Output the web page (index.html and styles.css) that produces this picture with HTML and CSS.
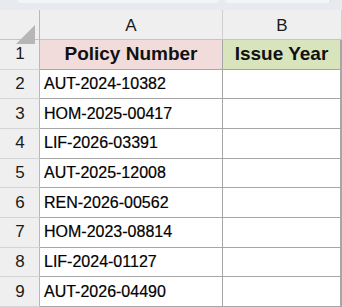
FILE: index.html
```html
<!DOCTYPE html>
<html>
<head>
<meta charset="utf-8">
<link rel="stylesheet" href="styles.css">
</head>
<body>
<div class="topbar">
  <div class="namebox"></div>
  <div class="fxbox"></div>
</div>
<div class="sheet">
  <div class="corner"><div class="tri"></div></div>
  <div class="colhead">A</div>
  <div class="colhead last">B</div>

  <div class="rowhead">1</div>
  <div class="cell hdr pink">Policy Number</div>
  <div class="cell hdr green last">Issue Year</div>

  <div class="rowhead">2</div>
  <div class="cell">AUT-2024-10382</div>
  <div class="cell last"></div>

  <div class="rowhead">3</div>
  <div class="cell">HOM-2025-00417</div>
  <div class="cell last"></div>

  <div class="rowhead">4</div>
  <div class="cell">LIF-2026-03391</div>
  <div class="cell last"></div>

  <div class="rowhead">5</div>
  <div class="cell">AUT-2025-12008</div>
  <div class="cell last"></div>

  <div class="rowhead">6</div>
  <div class="cell">REN-2026-00562</div>
  <div class="cell last"></div>

  <div class="rowhead">7</div>
  <div class="cell">HOM-2023-08814</div>
  <div class="cell last"></div>

  <div class="rowhead">8</div>
  <div class="cell">LIF-2024-01127</div>
  <div class="cell last"></div>

  <div class="rowhead">9</div>
  <div class="cell">AUT-2026-04490</div>
  <div class="cell last"></div>
</div>
</body>
</html>
```

FILE: styles.css
```css
html, body {
  margin: 0;
  padding: 0;
  background: #ffffff;
}
body {
  width: 342px;
  height: 307px;
  overflow: hidden;
  font-family: "Liberation Sans", Arial, sans-serif;
}
.topbar {
  height: 10px;
  background: #e7ebef;
  display: flex;
  gap: 6px;
  padding-left: 18px;
}
.namebox {
  width: 201px;
  height: 3px;
  background: #f2f4f6;
  border-radius: 0 0 3px 3px;
}
.fxbox {
  width: 105px;
  height: 3px;
  background: #f2f4f6;
  border-radius: 0 0 3px 3px;
  border-right: 1px solid #d8dce0;
}
.sheet {
  display: grid;
  grid-template-columns: 40px 183px 119px;
  grid-template-rows: 30px repeat(9, 1fr);
  height: 297px;
}
.corner {
  background: #efefef;
  border-right: 1px solid #b8b8b8;
  border-bottom: 1px solid #c4c4c4;
  position: relative;
}
.tri {
  position: absolute;
  left: 16px;
  top: 15px;
  width: 0;
  height: 0;
  border-left: 19px solid transparent;
  border-bottom: 19px solid #b6b6b6;
}
.colhead {
  background: #efefef;
  border-right: 1px solid #cfcfcf;
  border-bottom: 1px solid #c4c4c4;
  display: flex;
  align-items: center;
  justify-content: center;
  font-size: 17px;
  color: #1a1a1a;
  padding-top: 2px;
}
.colhead.last {
  border-right: 1px solid #d0d0d0;
}
.rowhead {
  background: #efefef;
  border-right: 1px solid #b8b8b8;
  border-bottom: 1px solid #d4d4d4;
  display: flex;
  align-items: center;
  justify-content: center;
  font-size: 17px;
  color: #1a1a1a;
  padding-left: 1px;
}
.cell {
  border-right: 1px solid #a6a6a6;
  border-bottom: 1px solid #a6a6a6;
  display: flex;
  align-items: center;
  padding-left: 4px;
  font-size: 16px;
  color: #000;
  white-space: nowrap;
  overflow: hidden;
  -webkit-text-stroke: 0.2px #000;
}
.cell.last {
  border-right: 2px solid #a6a6a6;
}
.hdr {
  font-weight: bold;
  justify-content: center;
  padding-left: 0;
  font-size: 19px;
  color: #111;
  -webkit-text-stroke: 0;
}
.pink {
  background: #f2dcdb;
}
.green {
  background: #d8e4bc;
}
```
